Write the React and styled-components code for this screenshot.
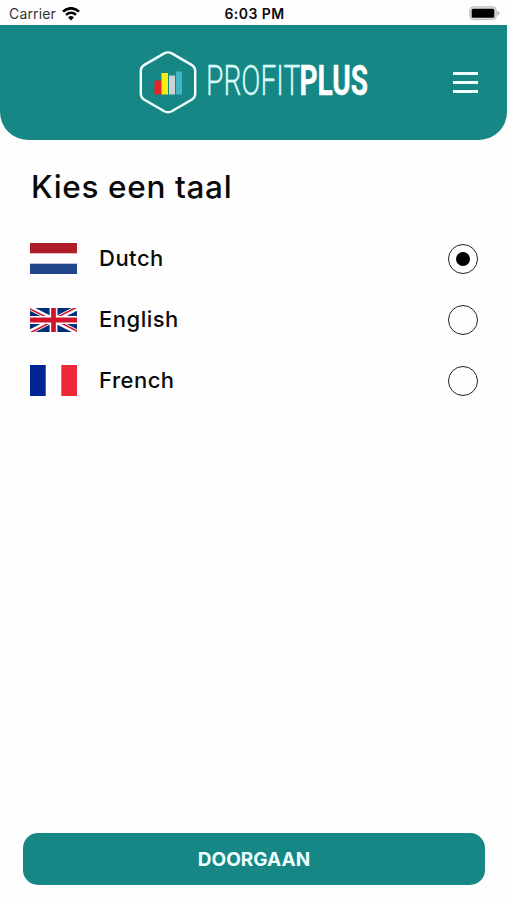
import React, { useState } from "react";
import styled, { createGlobalStyle } from "styled-components";

const GlobalStyle = createGlobalStyle`
  * {
    box-sizing: border-box;
  }

  body {
    margin: 0;
    background-color: #fefefe;
    color: #0a0a0a;
    font-family: Inter, "Liberation Sans", sans-serif;
  }
`;

// Styled components
const Screen = styled.div`
  display: flex;
  flex-direction: column;
  height: 100vh;
  min-height: 900px;
`;

const StatusBar = styled.div`
  display: grid;
  grid-template-columns: 1fr auto 1fr;
  align-items: center;
  height: 25px;
  padding: 2px 7px 0 9px;
  font-size: 14px;
  line-height: 20px;
`;

const Carrier = styled.div`
  display: flex;
  align-items: center;
  gap: 6px;
  color: #333;
  letter-spacing: 0.15px;
`;

const Time = styled.div`
  font-weight: 600;
  letter-spacing: 0.45px;
`;

const Battery = styled.svg`
  justify-self: end;
`;

const Header = styled.header`
  display: grid;
  grid-template-columns: 1fr auto 1fr;
  align-items: center;
  height: 115px;
  padding: 0 29px;
  border-radius: 0 0 28px 28px;
  background-color: #178786;
`;

const Logo = styled.svg`
  grid-column: 2;
  display: block;
`;

const LogoText = styled.text`
  font-family: Roboto, sans-serif;
  font-size: 42.5px;
  font-weight: ${({ $bold }) => ($bold ? 700 : 300)};
  fill: ${({ $bold }) => ($bold ? "#fff" : "#d9fbfa")};
  stroke: ${({ $bold }) => ($bold ? "#fff" : "#d9fbfa")};
  stroke-width: ${({ $bold }) => ($bold ? 0.4 : 0.3)};
`;

const MenuButton = styled.button`
  justify-self: end;
  display: flex;
  flex-direction: column;
  gap: 6px;
  width: 25px;
  padding: 0;
  border: 0;
  background: none;
  cursor: pointer;
`;

const MenuLine = styled.span`
  height: 3px;
  background-color: #f4ffff;
`;

const Content = styled.main`
  flex: 1;
  padding: 28px 29px 0 30px;
`;

const Title = styled.h1`
  margin: 0 0 22px;
  padding-left: 1px;
  font-size: 31.5px;
  font-weight: 550;
  line-height: 38px;
  letter-spacing: 0.65px;
`;

const Language = styled.label`
  display: flex;
  align-items: center;
  height: 61px;
  cursor: pointer;
`;

const FlagBox = styled.span`
  display: flex;
  width: 47px;
  margin-right: 22px;
`;

const LanguageName = styled.span`
  flex: 1;
  padding-bottom: 2px;
  font-size: 22px;
  font-weight: 550;
  line-height: 28px;
  letter-spacing: 0.5px;
`;

const Radio = styled.input`
  appearance: none;
  display: grid;
  place-items: center;
  width: 30px;
  height: 30px;
  margin: 0;
  border: 1.5px solid #222;
  border-radius: 50%;
  cursor: pointer;

  &:checked::before {
    content: "";
    width: 14px;
    height: 14px;
    border-radius: 50%;
    background-color: #000;
  }
`;

const Footer = styled.footer`
  padding: 0 22px 15px 23px;
`;

const ContinueButton = styled.button`
  display: block;
  width: 100%;
  height: 52px;
  padding: 0;
  border: 0;
  border-radius: 15px;
  background-color: #178786;
  color: #f0ffff;
  font-family: inherit;
  font-size: 19px;
  font-weight: 700;
  cursor: pointer;
`;

const WifiIcon = () => (
  <svg width="18" height="14" viewBox="0 0 18 14" fill="none" stroke="#000">
    <path d="M1 4.6a11.3 11.3 0 0 1 16 0" strokeWidth="2.7" />
    <path d="M4 7.8a7.1 7.1 0 0 1 10 0" strokeWidth="2.4" />
    <path d="M9 13.4 6.1 10.5a4.2 4.2 0 0 1 5.8 0Z" fill="#000" stroke="none" />
  </svg>
);

const BatteryIcon = () => (
  <Battery width="31" height="15" viewBox="0 0 31 15">
    <rect x="0.8" y="0.8" width="26.5" height="12.8" rx="3.5" fill="#ddd" stroke="#bbb" />
    <rect x="2.7" y="2.7" width="22.6" height="9" rx="1.5" fill="#000" />
    <path d="M28.5 4.8v5c2.4-1 2.4-4 0-5Z" fill="#aaa" />
  </Battery>
);

const ProfitPlusLogo = () => (
  <Logo width="230" height="64" viewBox="0 0 230 64">
    <path
      d="M25.2 2.4Q29 0.4 32.8 2.4L52.6 13.9Q56.2 16 56.2 20.2V42.4Q56.2 46.6 52.6 48.7L32.8 60.2Q29 62.2 25.2 60.2L5.4 48.7Q1.8 46.6 1.8 42.4V20.2Q1.8 16 5.4 13.9Z"
      fill="none"
      stroke="#f2ffff"
      strokeWidth="2.4"
    />
    <rect x="15.5" y="29.5" width="6.5" height="14" fill="#e42528" />
    <rect x="22.5" y="22" width="6.5" height="21.5" fill="#f8ed10" />
    <rect x="30" y="24.5" width="6" height="19" fill="#cbd3d5" />
    <rect x="37" y="20.5" width="6" height="23" fill="#43b6c8" />
    <LogoText transform="translate(67 44) scale(0.665 1)">PROFIT</LogoText>
    <LogoText transform="translate(160.5 44) scale(0.66 1)" $bold>
      PLUS
    </LogoText>
  </Logo>
);

const DutchFlag = () => (
  <svg width="47" height="31" viewBox="0 0 47 31">
    <rect width="47" height="31" fill="#fff" />
    <rect width="47" height="10.3" fill="#ae1c28" />
    <rect y="20.7" width="47" height="10.3" fill="#21468b" />
  </svg>
);

const EnglishFlag = () => (
  <svg width="47" height="24" viewBox="0 0 60 30" preserveAspectRatio="none">
    <clipPath id="diagonals">
      <path d="M30 15h30v15zv15H0zH0V0zV0h30z" />
    </clipPath>
    <rect width="60" height="30" fill="#012d7d" />
    <path d="M0 0 60 30M60 0 0 30" stroke="#fff" strokeWidth="6" />
    <path
      d="M0 0 60 30M60 0 0 30"
      clipPath="url(#diagonals)"
      stroke="#d0142c"
      strokeWidth="4"
    />
    <path d="M30 0v30M0 15h60" stroke="#fff" strokeWidth="10" />
    <path d="M30 0v30M0 15h60" stroke="#d0142c" strokeWidth="6" />
  </svg>
);

const FrenchFlag = () => (
  <svg width="47" height="31" viewBox="0 0 47 31">
    <rect width="47" height="31" fill="#fff" />
    <rect width="15.7" height="31" fill="#002395" />
    <rect x="31.3" width="15.7" height="31" fill="#ed2939" />
  </svg>
);

const languages = [
  { name: "Dutch", Flag: DutchFlag },
  { name: "English", Flag: EnglishFlag },
  { name: "French", Flag: FrenchFlag },
];

const App = () => {
  const [selected, setSelected] = useState("Dutch");

  return (
    <Screen>
      <GlobalStyle />
      <StatusBar>
        <Carrier>
          Carrier
          <WifiIcon />
        </Carrier>
        <Time>6:03 PM</Time>
        <BatteryIcon />
      </StatusBar>
      <Header>
        <ProfitPlusLogo />
        <MenuButton>
          <MenuLine />
          <MenuLine />
          <MenuLine />
        </MenuButton>
      </Header>
      <Content>
        <Title>Kies een taal</Title>
        {languages.map(({ name, Flag }) => (
          <Language key={name}>
            <FlagBox>
              <Flag />
            </FlagBox>
            <LanguageName>{name}</LanguageName>
            <Radio
              type="radio"
              name="language"
              checked={selected === name}
              onChange={() => setSelected(name)}
            />
          </Language>
        ))}
      </Content>
      <Footer>
        <ContinueButton>DOORGAAN</ContinueButton>
      </Footer>
    </Screen>
  );
};

export default App;
